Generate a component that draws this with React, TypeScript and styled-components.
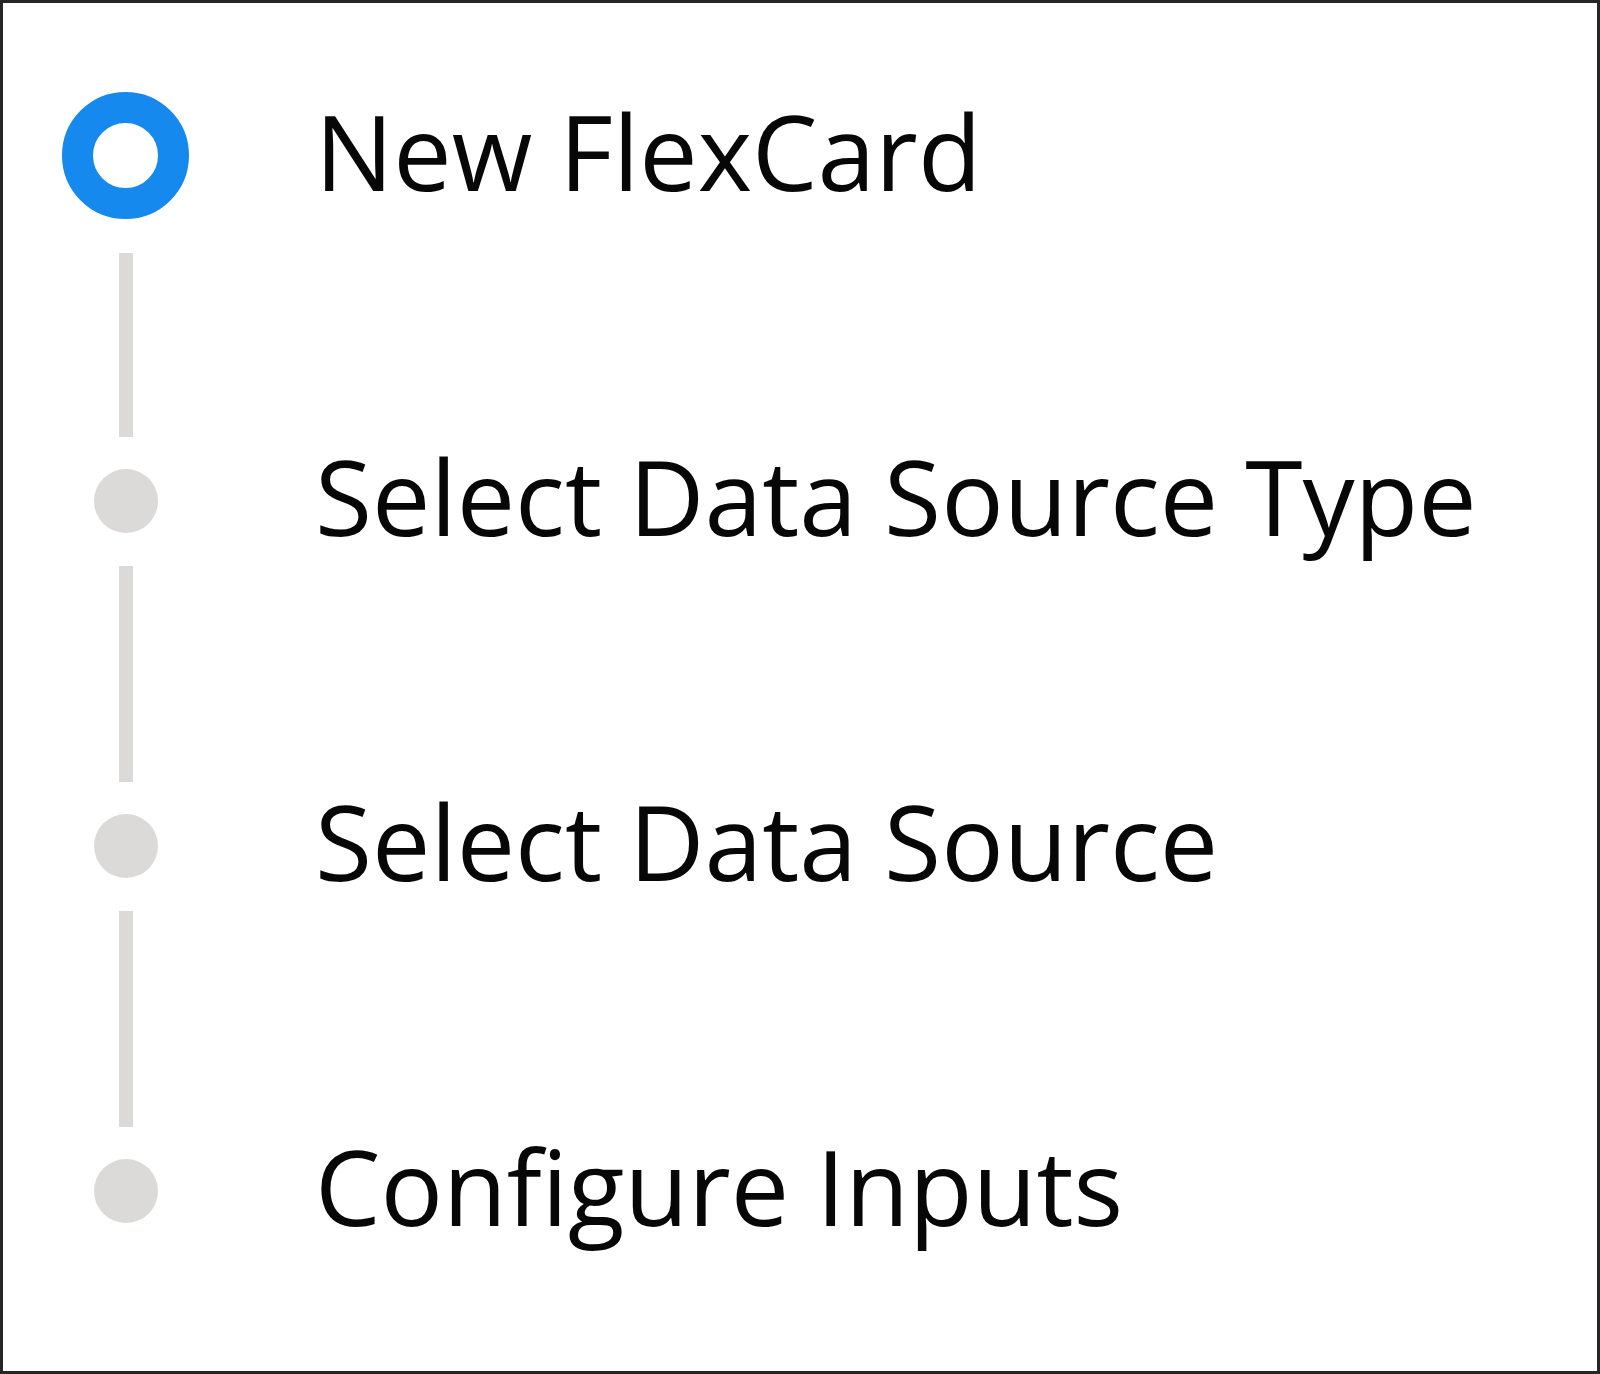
import React from "react";
import styled, { createGlobalStyle } from "styled-components";

const GlobalStyle = createGlobalStyle`
  html, body {
    margin: 0;
    padding: 0;
    background: #ffffff;
  }
  body {
    font-family: "Open Sans", "Noto Sans", "Liberation Sans", sans-serif;
  }
`;

const Frame = styled.div`
  box-sizing: border-box;
  width: 1600px;
  height: 1374px;
  border: 3px solid #262626;
  background: #ffffff;
  padding: 89px 0 0 59px;
  display: flex;
  flex-direction: column;
  align-items: flex-start;
`;

const Step = styled.div<{ $size: number }>`
  display: flex;
  align-items: center;
  gap: 126px;
  height: ${(p) => p.$size}px;
`;

const MarkerCol = styled.div`
  width: 127px;
  display: flex;
  justify-content: center;
  align-items: center;
  flex-shrink: 0;
`;

const Ring = styled.div`
  box-sizing: border-box;
  width: 127px;
  height: 127px;
  border-radius: 50%;
  border: 31px solid #1589ee;
  background: #ffffff;
`;

const Dot = styled.div`
  width: 64px;
  height: 64px;
  border-radius: 50%;
  background: #dbdad9;
`;

const Label = styled.span`
  font-family: "Open Sans", "Noto Sans", "Liberation Sans", sans-serif;
  font-size: 104px;
  font-weight: 400;
  line-height: 1;
  color: #080707;
  white-space: nowrap;
  padding-bottom: 10px;
`;

const Connector = styled.div<{ $length: number; $top: number }>`
  width: 14px;
  height: ${(p) => p.$length}px;
  margin: ${(p) => p.$top}px 0 32px 57px;
  background: #dbdad9;
`;

const steps = [
  "New FlexCard",
  "Select Data Source Type",
  "Select Data Source",
  "Configure Inputs",
];

export default function App() {
  return (
    <>
      <GlobalStyle />
      <Frame>
        {steps.map((label, i) => {
          const active = i === 0;
          return (
            <React.Fragment key={label}>
              {i > 0 && (
                <Connector $length={i === 1 ? 184 : 216} $top={i === 1 ? 34 : 33} />
              )}
              <Step $size={active ? 127 : 64}>
                <MarkerCol>{active ? <Ring /> : <Dot />}</MarkerCol>
                <Label>{label}</Label>
              </Step>
            </React.Fragment>
          );
        })}
      </Frame>
    </>
  );
}
